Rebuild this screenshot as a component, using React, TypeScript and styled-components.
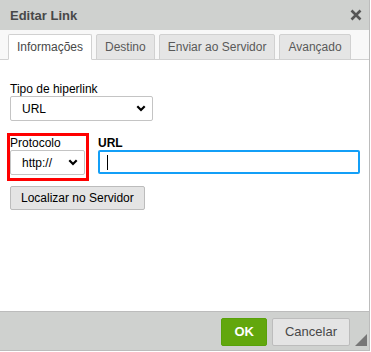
import React from 'react';
import styled, { createGlobalStyle } from 'styled-components';

const GlobalStyle = createGlobalStyle`
  html, body {
    margin: 0;
    padding: 0;
    background: #ffffff;
  }
  body {
    font-family: "Liberation Sans", Arial, sans-serif;
    font-size: 12px;
    color: #000;
  }
`;

const Dialog = styled.div`
  width: 369px;
  height: 350px;
  border-right: 1px solid #bcbcbc;
  border-bottom: 1px solid #bcbcbc;
  display: flex;
  flex-direction: column;
  background: #fff;
`;

const TitleBar = styled.div`
  height: 30px;
  background: #cfd1cf;
  display: flex;
  align-items: center;
  justify-content: space-between;
  padding: 0 7px 0 10px;
  box-sizing: border-box;
`;

const Title = styled.span`
  font-weight: bold;
  font-size: 13px;
  color: #484848;
`;

const Close = styled.span`
  width: 12px;
  height: 12px;
  display: flex;
  align-items: center;
  justify-content: center;
`;

const TabStrip = styled.div`
  height: 30px;
  background: #f8f8f8;
  border-bottom: 1px solid #d1d1d1;
  display: flex;
  align-items: flex-end;
  gap: 4px;
  padding-left: 8px;
  box-sizing: border-box;
`;

const Tab = styled.div<{ $active?: boolean }>`
  height: 26px;
  padding: 0 8px;
  margin-bottom: -1px;
  display: flex;
  align-items: center;
  box-sizing: border-box;
  white-space: nowrap;
  border: 1px solid #d1d1d1;
  border-radius: 2px 2px 0 0;
  border-bottom: ${(p) => (p.$active ? '1px solid #fff' : '1px solid #d1d1d1')};
  background: ${(p) => (p.$active ? '#fff' : '#e5e5e5')};
  color: ${(p) => (p.$active ? '#484848' : '#595959')};
  font-size: 12px;
`;

const Content = styled.div`
  flex: 1;
  padding: 22px 9px 0 10px;
  display: flex;
  flex-direction: column;
`;

const Label = styled.label<{ $bold?: boolean }>`
  display: block;
  font-size: 12px;
  font-weight: ${(p) => (p.$bold ? 'bold' : 'normal')};
  color: #000;
  line-height: 14px;
`;

const Select = styled.div<{ $width: number }>`
  width: ${(p) => p.$width}px;
  height: 25px;
  box-sizing: border-box;
  border: 1px solid #c4c4c4;
  border-radius: 2px;
  background: #fff;
  display: flex;
  align-items: center;
  justify-content: space-between;
  padding: 0 6px 0 11px;
  font-size: 12px;
  color: #000;
`;

const Row = styled.div`
  display: flex;
  margin-top: 12px;
`;

const Highlight = styled.div`
  border: 3px solid #ff0000;
  margin-left: -3px;
  padding: 0 1px 3px 0;
`;

const UrlCol = styled.div`
  flex: 1;
  padding: 3px 0 0 9px;
`;

const UrlInput = styled.div`
  height: 24px;
  box-sizing: border-box;
  border: 2px solid #139ff7;
  border-radius: 2px;
  display: flex;
  align-items: center;
  padding-left: 7px;
`;

const Caret = styled.span`
  width: 1px;
  height: 15px;
  background: #000;
`;

const Button = styled.div`
  margin-top: 5px;
  align-self: flex-start;
  height: 24px;
  padding: 0 10px;
  box-sizing: border-box;
  border: 1px solid #bcbcbc;
  border-radius: 2px;
  background: #e4e4e4;
  display: flex;
  align-items: center;
  font-size: 12px;
  color: #000;
`;

const Footer = styled.div`
  height: 39px;
  box-sizing: border-box;
  background: #cfd1cf;
  border-top: 1px solid #bcbcbc;
  display: flex;
  align-items: center;
  justify-content: flex-end;
  gap: 5px;
  padding: 1px 19px 0 0;
  position: relative;
`;

const FooterButton = styled.div<{ $ok?: boolean }>`
  height: 28px;
  box-sizing: border-box;
  padding: 0 12px;
  border: 1px solid ${(p) => (p.$ok ? '#58a10a' : '#bcbcbc')};
  border-radius: 2px;
  background: ${(p) => (p.$ok ? '#62a70d' : '#e4e4e4')};
  color: ${(p) => (p.$ok ? '#fff' : '#484848')};
  font-weight: ${(p) => (p.$ok ? 'bold' : 'normal')};
  font-size: 13px;
  display: flex;
  align-items: center;
`;

const Grip = styled.div`
  position: absolute;
  right: 2px;
  bottom: 4px;
  width: 0;
  height: 0;
  border-left: 12px solid transparent;
  border-bottom: 12px solid #777;
`;

const Chevron = () => (
  <svg width="10" height="7" viewBox="0 0 10 7">
    <path d="M1.3 1.3 L5 5 L8.7 1.3" fill="none" stroke="#000" strokeWidth="2.2" />
  </svg>
);

const App = () => {
  return (
    <>
      <GlobalStyle />
      <Dialog>
        <TitleBar>
          <Title>Editar Link</Title>
          <Close>
            <svg width="12" height="12" viewBox="0 0 12 12">
              <path d="M1.5 1.5 L10.5 10.5 M10.5 1.5 L1.5 10.5" stroke="#555" strokeWidth="2.6" />
            </svg>
          </Close>
        </TitleBar>
        <TabStrip>
          <Tab $active>Informações</Tab>
          <Tab>Destino</Tab>
          <Tab>Enviar ao Servidor</Tab>
          <Tab>Avançado</Tab>
        </TabStrip>
        <Content>
          <Label>Tipo de hiperlink</Label>
          <Select $width={143}>
            URL
            <Chevron />
          </Select>
          <Row>
            <Highlight>
              <Label>Protocolo</Label>
              <Select $width={75}>
                http://
                <Chevron />
              </Select>
            </Highlight>
            <UrlCol>
              <Label $bold>URL</Label>
              <UrlInput>
                <Caret />
              </UrlInput>
            </UrlCol>
          </Row>
          <Button>Localizar no Servidor</Button>
        </Content>
        <Footer>
          <FooterButton $ok>OK</FooterButton>
          <FooterButton>Cancelar</FooterButton>
          <Grip />
        </Footer>
      </Dialog>
    </>
  );
};

export default App;
